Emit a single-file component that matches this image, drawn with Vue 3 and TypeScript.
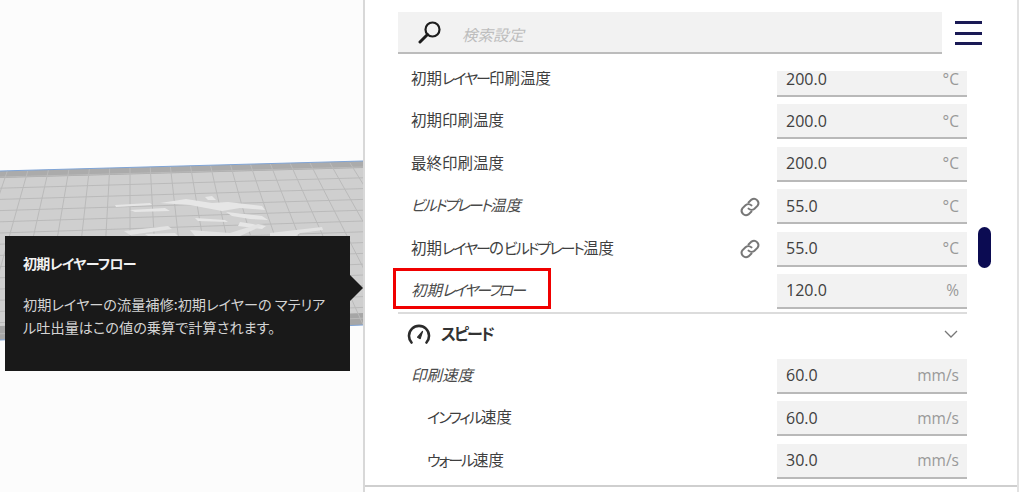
<script setup lang="ts">
interface Row { label: string; value: string; unit: string; italic?: boolean; link?: boolean; indent?: boolean; mark?: boolean }

const tempRows: Row[] = [
  { label: '初期レイヤー印刷温度', value: '200.0', unit: '°C' },
  { label: '初期印刷温度', value: '200.0', unit: '°C' },
  { label: '最終印刷温度', value: '200.0', unit: '°C' },
  { label: 'ビルドプレート温度', value: '55.0', unit: '°C', italic: true, link: true },
  { label: '初期レイヤーのビルドプレート温度', value: '55.0', unit: '°C', link: true },
  { label: '初期レイヤーフロー', value: '120.0', unit: '%', italic: true, mark: true }
]
const speedRows: Row[] = [
  { label: '印刷速度', value: '60.0', unit: 'mm/s', italic: true },
  { label: 'インフィル速度', value: '60.0', unit: 'mm/s', indent: true },
  { label: 'ウォール速度', value: '30.0', unit: 'mm/s', indent: true }
]
const groups = [
  { key: 'temp', rows: tempRows },
  { key: 'speed', rows: speedRows }
]

function segments(text: string): { text: string; kana: boolean }[] {
  return text
    .split(/([ァ-ヶー]+)/)
    .filter((s) => s.length > 0)
    .map((s) => ({ text: s, kana: /^[ァ-ヶー]+$/.test(s) }))
}

const hLines: string[] = []
for (let i = 0; i < 15; i++) {
  const yl = 177 + i * 11.2
  const yr = 167 + i * 10.8
  hLines.push(`M0 ${yl.toFixed(1)}L363 ${yr.toFixed(1)}`)
}
const vLines: string[] = []
for (let i = -10; i <= 20; i++) {
  const topX = 130 + i * 20
  const botX = 130 + i * 30
  vLines.push(`M${topX} 163L${botX} 340`)
}
const grid = [...hLines, ...vLines].join('')
</script>

<template>
  <div class="page">
    <div class="viewport">
      <svg class="scene" width="363" height="492" viewBox="0 0 363 492">
        <defs>
          <clipPath id="plate"><path d="M0 171L363 161V325L0 340Z" /></clipPath>
        </defs>
        <path d="M0 0H363V492H0Z" fill="#fcfcfc" />
        <path d="M0 171L363 161V325L0 340Z" fill="#cfcfcf" />
        <g clip-path="url(#plate)">
          <path d="M0 171L363 161V168L0 178Z" fill="#ababab" />
          <path d="M0 326L363 313V325L0 340Z" fill="#a6a6a6" />
          <path :d="grid" stroke="#bababa" stroke-width="1" fill="none" />
          <path d="M115 205L150 203L152 205L116 207Z M130 210L165 208L170 211L135 212Z M160 203L186 199L212 203L228 202L262 206L265 210L240 208L222 211L190 205Z M205 197L212 196L216 200L208 200Z M226 212L262 216L268 220L250 219L232 216Z M240 222L266 226L262 229L238 226Z M195 218L225 220L228 222L198 221Z" fill="#e6e6e6" />
          <path d="M124 231L168 226L172 229L130 235Z M145 234L175 233L178 236H148Z M190 230L230 233L258 224L264 225L240 236H195Z M270 233L322 227L323 230L300 233L296 236H270Z" fill="#e2e2e2" />
        </g>
        <path d="M0 171L363 161" stroke="#7fa4d6" stroke-width="1" fill="none" />
        <path d="M0 340L363 325" stroke="#7fa4d6" stroke-width="1" fill="none" />
      </svg>
      <div class="tooltip">
        <div class="tip-title">初期レイヤーフロー</div>
        <p class="tip-body">初期レイヤーの流量補修:初期レイヤーの マテリアル吐出量はこの値の乗算で計算されます。</p>
        <span class="tip-arrow"></span>
      </div>
    </div>

    <div class="panel">
      <div class="search-row">
        <div class="search">
          <svg class="search-icon" width="24" height="24" viewBox="0 0 24 24">
            <circle cx="14.5" cy="9.5" r="7" fill="none" stroke="#1d1d1d" stroke-width="2.2" />
            <path d="M9.5 14.5L2 22" stroke="#1d1d1d" stroke-width="3" stroke-linecap="round" />
          </svg>
          <span class="placeholder">検索設定</span>
        </div>
        <div class="menu"><i></i><i></i><i></i></div>
      </div>

      <div class="list">
        <div class="list-inner">
          <template v-for="g in groups" :key="g.key">
            <div v-if="g.key === 'speed'" class="section">
              <svg width="24" height="20" viewBox="0 0 24 20">
                <path d="M4.5 18.5A10 10 0 1 1 19.5 18.5" fill="none" stroke="#2b2b2b" stroke-width="2.6" stroke-linecap="round" />
                <path d="M10.6 13.2L15.5 7.5L13.2 14.6Z" fill="#2b2b2b" stroke="#2b2b2b" stroke-width="1.2" stroke-linejoin="round" />
              </svg>
              <span class="section-title">スピード</span>
              <svg class="chevron" width="14" height="8" viewBox="0 0 14 8">
                <path d="M1 1L7 7L13 1" fill="none" stroke="#777" stroke-width="1.3" />
              </svg>
            </div>
            <div class="rows">
              <div v-for="r in g.rows" :key="r.label" class="row">
                <span class="label" :class="{ italic: r.italic, indent: r.indent }"><span v-for="(s, i) in segments(r.label)" :key="i" :class="{ kana: s.kana }">{{ s.text }}</span></span>
                <svg v-if="r.link" class="link" width="24" height="24" viewBox="0 0 24 24">
                  <path d="M10.5 7.5L13.5 4.6A4.4 4.4 0 0 1 19.6 10.7L16.5 13.7A4.4 4.4 0 0 1 10.5 13.6" fill="none" stroke="#777" stroke-width="2" stroke-linecap="round" />
                  <path d="M13.5 16.5L10.5 19.4A4.4 4.4 0 0 1 4.4 13.3L7.5 10.3A4.4 4.4 0 0 1 13.5 10.4" fill="none" stroke="#777" stroke-width="2" stroke-linecap="round" />
                </svg>
                <div class="input">
                  <span class="value">{{ r.value }}</span>
                  <span class="unit">{{ r.unit }}</span>
                </div>
                <span v-if="r.mark" class="mark"></span>
              </div>
            </div>
          </template>
        </div>
        <span class="thumb"></span>
      </div>
    </div>
  </div>
</template>

<style>
html, body { margin: 0; background: #fff; }
</style>

<style scoped>
.page {
  display: flex;
  width: 1024px;
  height: 492px;
  overflow: hidden;
  background: #fff;
  font-family: "Noto Sans CJK JP", "Open Sans", sans-serif;
  font-feature-settings: "palt";
}
.viewport { position: relative; width: 363px; height: 492px; flex: none; }
.scene { display: block; }
.tooltip {
  position: absolute;
  left: 5px;
  top: 236px;
  width: 345px;
  height: 135px;
  box-sizing: border-box;
  padding: 17px 18px 0;
  background: #191919;
  color: #d4d4d4;
}
.tip-title { font-size: 14px; line-height: 20px; font-weight: 700; letter-spacing: -0.7px; color: #f2f2f2; }
.tip-body { margin: 20px 0 0; font-size: 14.2px; line-height: 23px; }
.tip-arrow {
  position: absolute;
  left: 345px;
  top: 39px;
  border-left: 13px solid #191919;
  border-top: 13px solid transparent;
  border-bottom: 13px solid transparent;
}
.panel {
  width: 656px;
  height: 492px;
  box-sizing: border-box;
  border-left: 2px solid #d8d8d8;
  border-right: 2px solid #e2e2e2;
  padding-left: 33px;
  background: #fff;
  flex: none;
}
.search-row { display: flex; padding-top: 12px; height: 71px; box-sizing: border-box; }
.search {
  display: flex;
  align-items: center;
  width: 544px;
  height: 42px;
  box-sizing: border-box;
  background: #f2f2f2;
  border-bottom: 2px solid #bcbcbc;
  padding-left: 20px;
}
.search-icon { flex: none; }
.placeholder { margin-left: 20px; padding-top: 3px; font-size: 15.5px; font-style: italic; color: #bdbdbd; }
.menu { display: flex; flex-direction: column; gap: 7.5px; margin: 9px 0 0 13px; }
.menu i { display: block; width: 27px; height: 3px; background: #1a1a55; }
.list {
  position: relative;
  height: 416px;
  margin-left: -33px;
  padding-left: 33px;
  box-sizing: border-box;
  overflow: hidden;
  border-bottom: 2px solid #cfcfcf;
}
.list-inner { width: 569px; margin-top: -9px; }
.rows { display: flex; flex-direction: column; gap: 7.4px; }
.row { position: relative; display: flex; align-items: center; height: 35px; }
.label { flex: 1; padding: 0 0 5px 13px; font-size: 15.5px; color: #3f3f3f; white-space: nowrap; }
.label.italic { font-style: italic; color: #4a4a4a; }
.label.indent { padding-left: 29px; }
.kana { font-size: 15px; letter-spacing: -2px; }
.link { flex: none; margin-right: 15px; }
.input {
  display: flex;
  align-items: center;
  justify-content: space-between;
  flex: none;
  width: 190px;
  height: 35px;
  box-sizing: border-box;
  padding: 0 8px 0 9px;
  background: #f2f2f2;
  border-bottom: 2px solid #b9b9b9;
}
.value { font-family: "Open Sans", sans-serif; font-size: 16px; color: #404040; }
.unit { font-family: "Open Sans", sans-serif; font-size: 15.5px; color: #999; }
.mark {
  position: absolute;
  left: -5px;
  top: -6px;
  width: 158px;
  height: 41px;
  box-sizing: border-box;
  border: 3px solid #f00000;
}
.section {
  display: flex;
  align-items: center;
  height: 47px;
  margin-top: 3px;
  padding: 0 9px 4px;
  box-sizing: border-box;
  border-top: 2px solid #dcdcdc;
}
.section-title { margin-left: 10px; padding-bottom: 2px; font-size: 16px; font-weight: 700; letter-spacing: -2px; color: #333; }
.chevron { margin-left: auto; }
.thumb {
  position: absolute;
  left: 613px;
  top: 156px;
  width: 13px;
  height: 41px;
  border-radius: 6.5px;
  background: #0b0b52;
}
</style>
